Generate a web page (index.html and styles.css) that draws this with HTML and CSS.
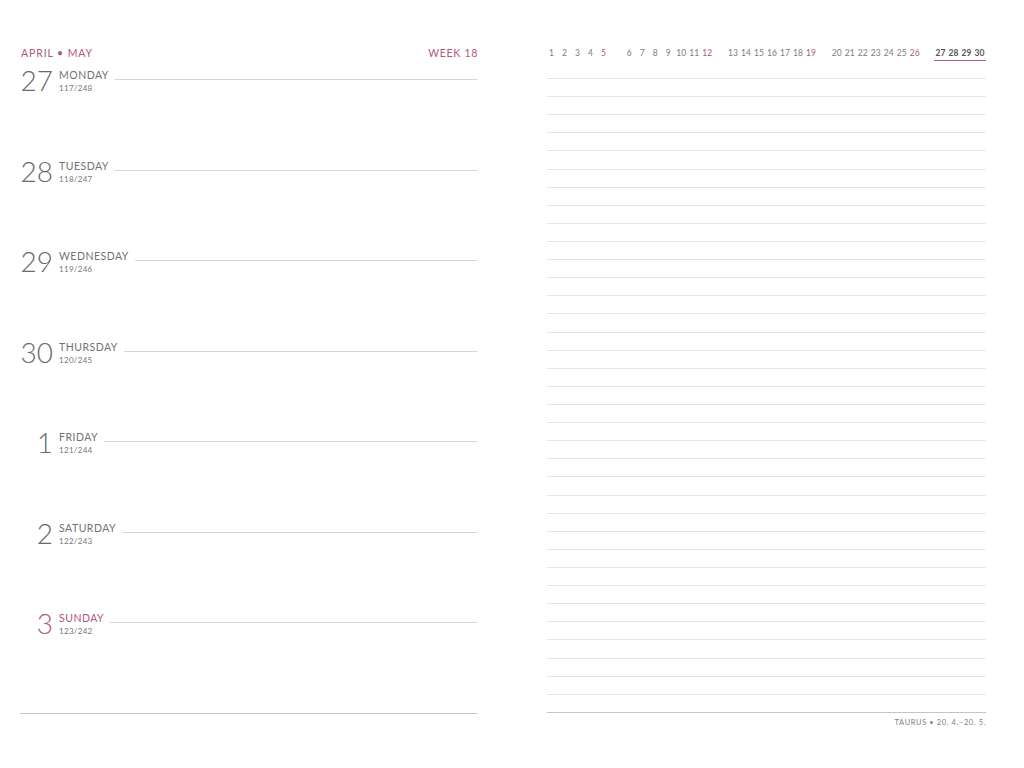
FILE: index.html
```html
<!DOCTYPE html>
<html lang="en">
<head>
<meta charset="utf-8">
<title>Week 18</title>
<link rel="stylesheet" href="styles.css">
</head>
<body>
<div class="spread">
  <section class="page left">
    <header class="head">
      <span>APRIL • MAY</span>
      <span>WEEK 18</span>
    </header>
    <div class="days">
      <div class="day"><div class="num">27</div><div class="info"><div class="name">MONDAY</div><div class="sub">117/248</div></div><div class="rule"></div></div>
      <div class="day"><div class="num">28</div><div class="info"><div class="name">TUESDAY</div><div class="sub">118/247</div></div><div class="rule"></div></div>
      <div class="day"><div class="num">29</div><div class="info"><div class="name">WEDNESDAY</div><div class="sub">119/246</div></div><div class="rule"></div></div>
      <div class="day"><div class="num">30</div><div class="info"><div class="name">THURSDAY</div><div class="sub">120/245</div></div><div class="rule"></div></div>
      <div class="day"><div class="num">1</div><div class="info"><div class="name">FRIDAY</div><div class="sub">121/244</div></div><div class="rule"></div></div>
      <div class="day"><div class="num">2</div><div class="info"><div class="name">SATURDAY</div><div class="sub">122/243</div></div><div class="rule"></div></div>
      <div class="day sunday"><div class="num">3</div><div class="info"><div class="name">SUNDAY</div><div class="sub">123/242</div></div><div class="rule"></div></div>
    </div>
    <div class="base"></div>
  </section>
  <section class="page right">
    <div class="minical">
      <span class="wk"><span>1</span><span>2</span><span>3</span><span>4</span><span class="sun">5</span></span>
      <span class="wk"><span>6</span><span>7</span><span>8</span><span>9</span><span>10</span><span>11</span><span class="sun">12</span></span>
      <span class="wk"><span>13</span><span>14</span><span>15</span><span>16</span><span>17</span><span>18</span><span class="sun">19</span></span>
      <span class="wk"><span>20</span><span>21</span><span>22</span><span>23</span><span>24</span><span>25</span><span class="sun">26</span></span>
      <span class="wk cur"><span>27</span><span>28</span><span>29</span><span>30</span></span>
    </div>
    <div class="ruled">
      <div></div><div></div><div></div><div></div><div></div><div></div><div></div>
      <div></div><div></div><div></div><div></div><div></div><div></div><div></div>
      <div></div><div></div><div></div><div></div><div></div><div></div><div></div>
      <div></div><div></div><div></div><div></div><div></div><div></div><div></div>
      <div></div><div></div><div></div><div></div><div></div><div></div><div></div>
    </div>
    <div class="base"></div>
    <div class="zodiac">TAURUS • 20. 4.–20. 5.</div>
  </section>
</div>
</body>
</html>
```
FILE: styles.css
```css
html, body {
  margin: 0;
  padding: 0;
  background: #ffffff;
}
body {
  font-family: Lato, "Open Sans", sans-serif;
  color: #747474;
  width: 1024px;
  height: 768px;
}
.spread {
  display: flex;
  gap: 70px;
  padding-left: 20px;
}
.page {
  display: flex;
  flex-direction: column;
  padding-top: 47px;
}
.left {
  width: 457px;
}
.right {
  width: 439px;
}
.head {
  display: flex;
  justify-content: space-between;
  font-size: 10.5px;
  font-weight: 400;
  line-height: 12px;
  letter-spacing: 0.9px;
  color: #b0587a;
  padding-left: 1px;
  margin-bottom: 8px;
}
.head span:last-child {
  letter-spacing: 0.7px;
  margin-right: -1px;
}
.day {
  display: flex;
  align-items: flex-start;
  height: 90.5px;
}
.num {
  width: 33px;
  text-align: right;
  font-size: 28px;
  line-height: 27px;
  font-weight: 300;
  color: #6a6a6a;
  letter-spacing: 0;
}
.info {
  margin-left: 6px;
  padding-top: 3px;
}
.name {
  font-size: 10.5px;
  line-height: 10px;
  font-weight: 400;
  letter-spacing: 0.5px;
  color: #727272;
}
.sub {
  font-size: 8px;
  line-height: 8px;
  letter-spacing: 0.3px;
  margin-top: 4px;
  color: #777777;
}
.sunday .num,
.sunday .name {
  color: #b0587a;
}
.rule {
  flex: 1;
  margin-left: 6px;
  margin-top: 12px;
  border-top: 1px solid #d6d6d6;
}
.base {
  border-top: 1px solid #c4c4c4;
}
.left .base {
  margin-top: 12px;
}
.minical {
  display: flex;
  justify-content: space-between;
  margin-left: -2px;
  font-size: 8.5px;
  line-height: 12px;
  color: #7c7c7c;
}
.wk {
  display: flex;
}
.wk span {
  width: 13px;
  text-align: center;
}
.wk .sun {
  color: #b0587a;
}
.wk.cur {
  font-weight: 700;
  color: #555555;
  border-bottom: 1px solid #b0587a;
  padding-bottom: 1px;
}
.ruled {
  margin-top: 17px;
}
.ruled div {
  height: 18.114px;
  box-sizing: border-box;
  border-top: 1px solid #e6e6e6;
}
.zodiac {
  text-align: right;
  font-size: 7.5px;
  line-height: 8px;
  letter-spacing: 0.6px;
  color: #808080;
  margin-top: 6px;
}
```
